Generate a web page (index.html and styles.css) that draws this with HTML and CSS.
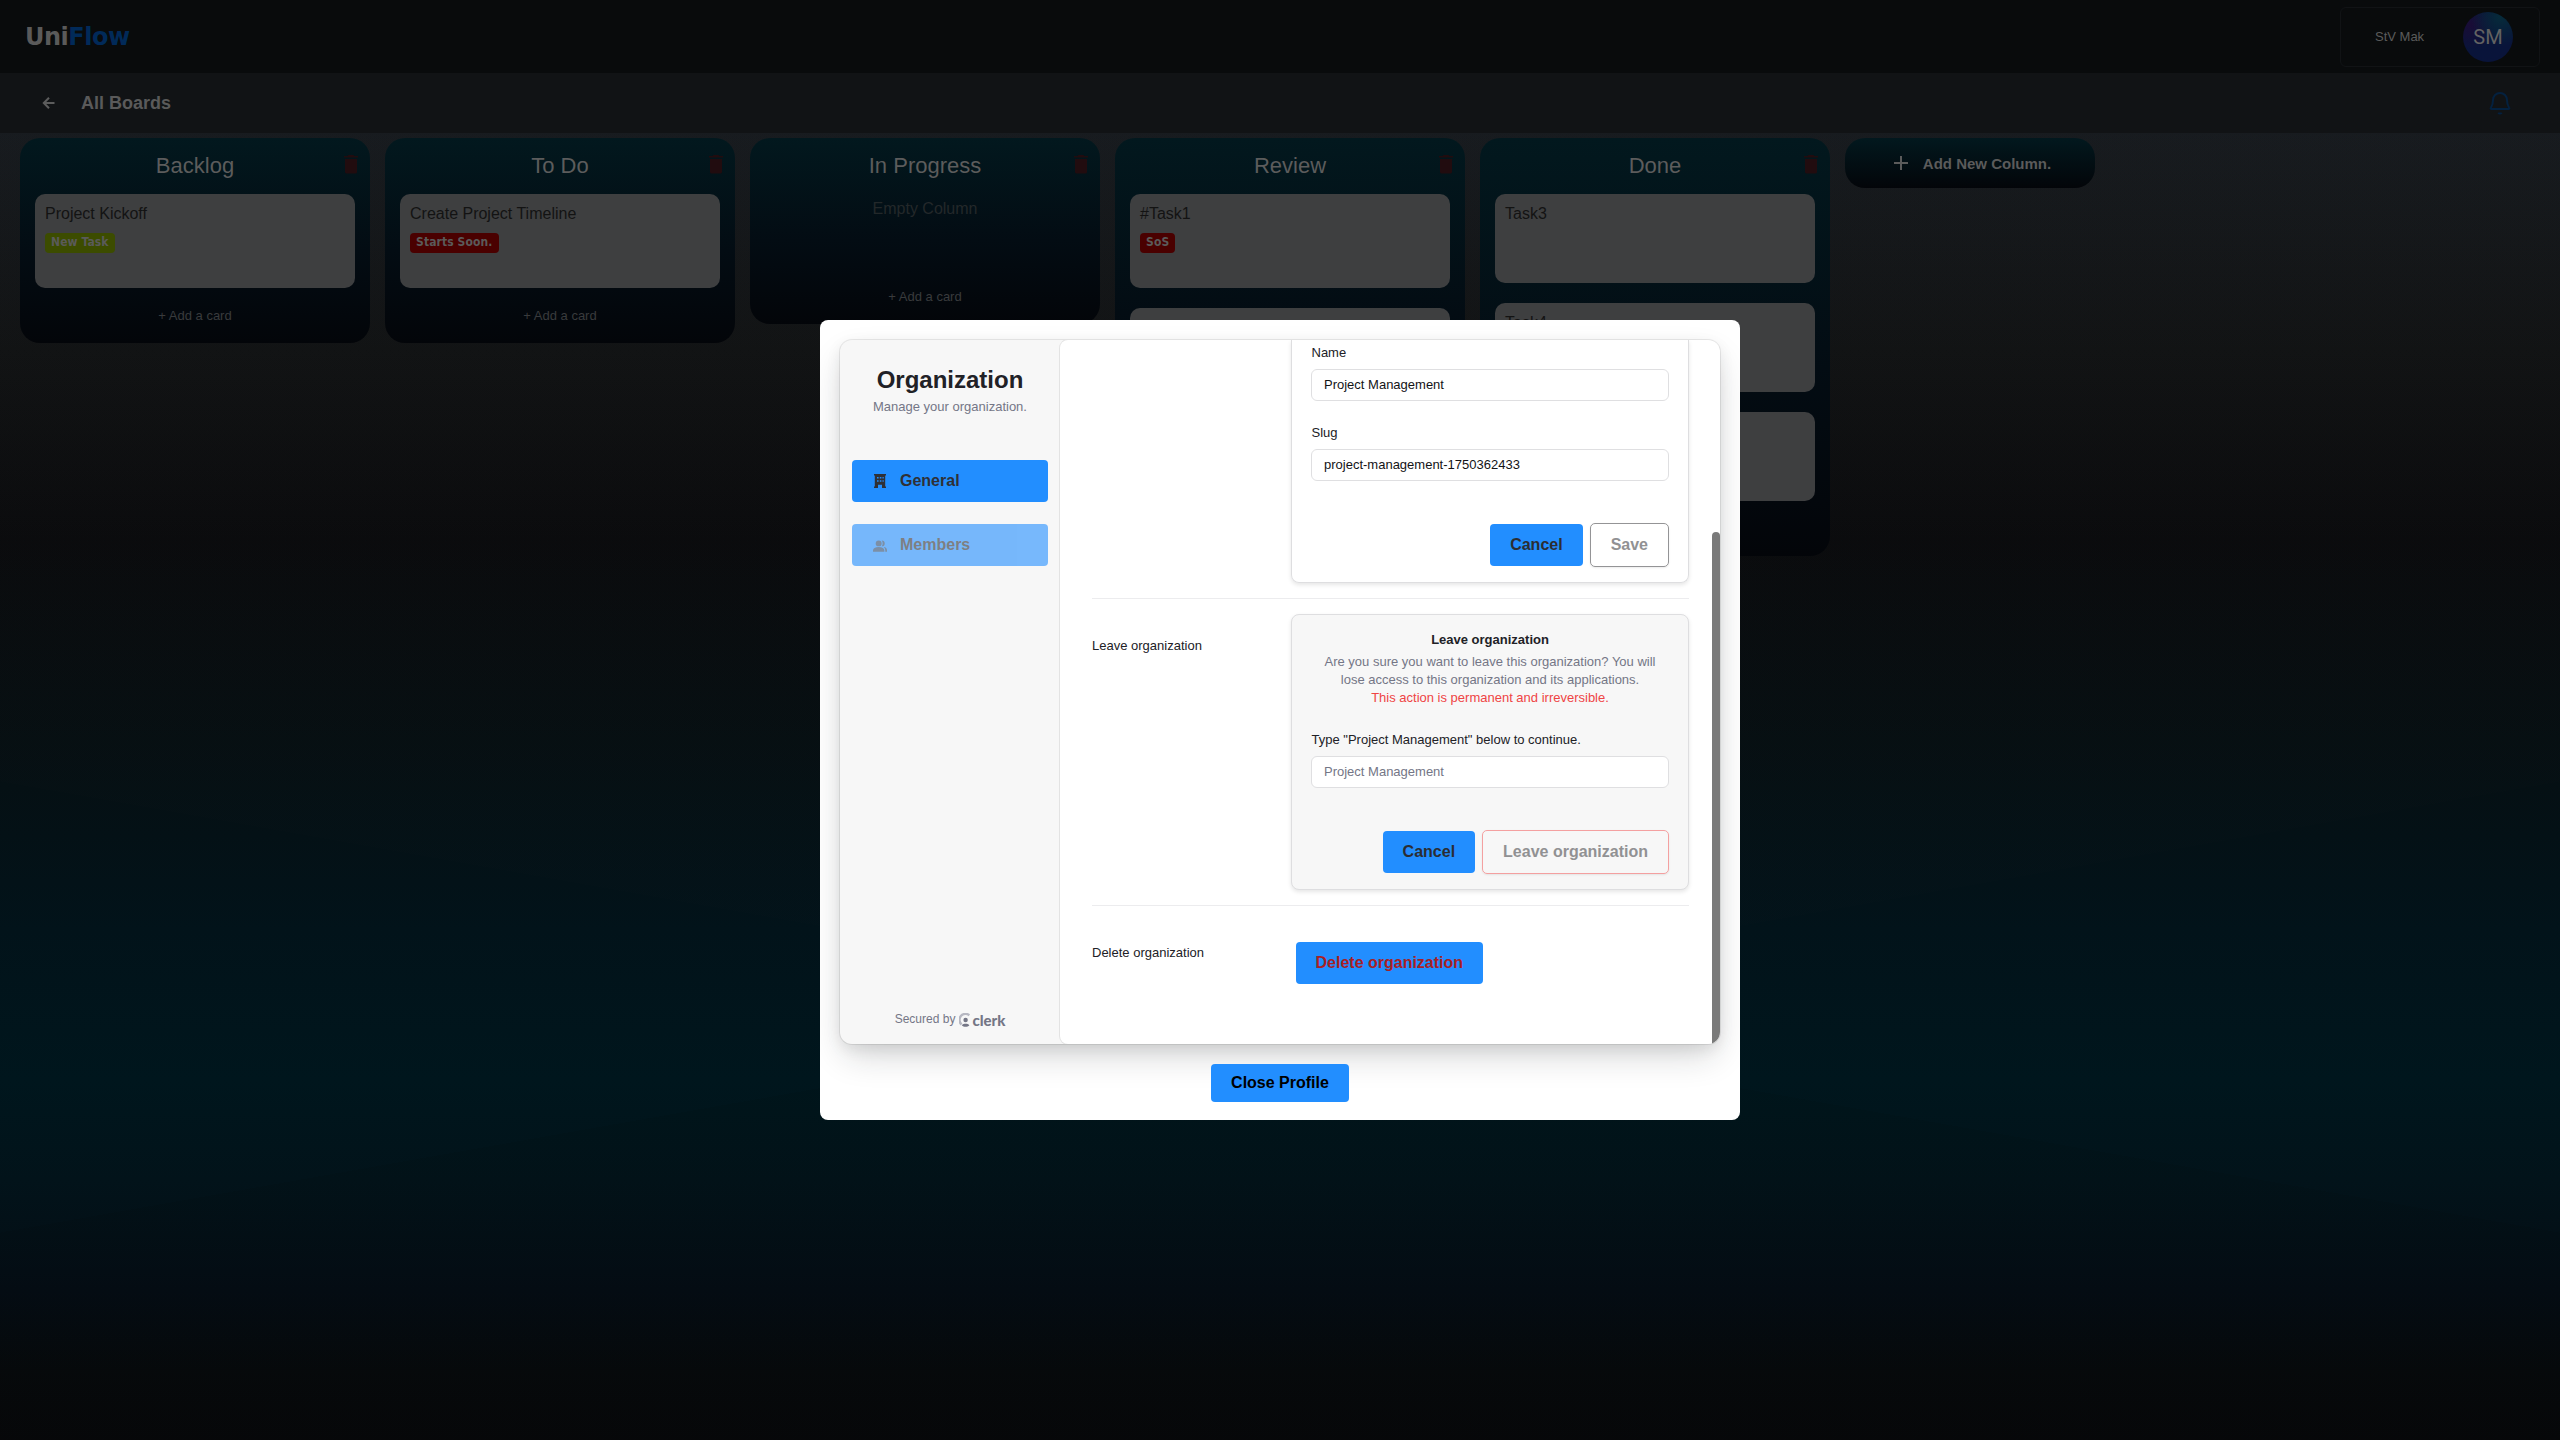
FILE: index.html
```
<!DOCTYPE html>
<html lang="en">
<head>
<meta charset="utf-8">
<title>UniFlow</title>
<link rel="stylesheet" href="styles.css">
</head>
<body>
<svg class="defs" aria-hidden="true">
  <symbol id="trash" viewBox="0 0 14 19"><path d="M4.4 0h5.2l.8 1H14v1.600H0V1h3.600zM1 4h12v13a1.600 1.600 0 0 1-1.600 1.500H2.600A1.600 1.600 0 0 1 1 17z"/></symbol>
</svg>
<header class="topbar">
  <div class="brand">Uni<span>Flow</span></div>
  <div class="account">
    <span class="account-name">StV Mak</span>
    <span class="avatar">SM</span>
  </div>
</header>
<nav class="subbar">
  <svg class="back" viewBox="0 0 16 16"><path d="M13.500 8H3M8 2.800 2.800 8 8 13.200"/></svg>
  <h1>All Boards</h1>
  <svg class="bell" viewBox="0 0 24 24"><path d="M12 2a7 7 0 0 0-7 7c0 4.500-1 6-2 7.500-.7 1-.5 1.500.3 1.500h17.400c.8 0 1-.5.3-1.500-1-1.500-2-3-2-7.500a7 7 0 0 0-7-7zM10.200 21.800c.9 1 2.700 1 3.600 0"/></svg>
</nav>
<main class="board">
  <section class="column">
    <div class="column-head"><h2>Backlog</h2><svg class="trash"><use href="#trash"/></svg></div>
    <article class="card"><p>Project Kickoff</p><span class="tag lime">New Task</span></article>
    <button class="add-card">+ Add a card</button>
  </section>
  <section class="column">
    <div class="column-head"><h2>To Do</h2><svg class="trash"><use href="#trash"/></svg></div>
    <article class="card"><p>Create Project Timeline</p><span class="tag red">Starts Soon.</span></article>
    <button class="add-card">+ Add a card</button>
  </section>
  <section class="column">
    <div class="column-head"><h2>In Progress</h2><svg class="trash"><use href="#trash"/></svg></div>
    <p class="empty">Empty Column</p>
    <button class="add-card">+ Add a card</button>
  </section>
  <section class="column">
    <div class="column-head"><h2>Review</h2><svg class="trash"><use href="#trash"/></svg></div>
    <article class="card"><p>#Task1</p><span class="tag red">SoS</span></article>
    <article class="card"></article>
    <button class="add-card"></button>
  </section>
  <section class="column">
    <div class="column-head"><h2>Done</h2><svg class="trash"><use href="#trash"/></svg></div>
    <article class="card short"><p>Task3</p></article>
    <article class="card short"><p>Task4</p></article>
    <article class="card short"></article>
    <button class="add-card"></button>
  </section>
  <button class="add-column"><svg viewBox="0 0 14 14"><path d="M7 0v14M0 7h14"/></svg>Add New Column.</button>
</main>

<div class="modal">
  <div class="profile">
    <aside class="side">
      <h2>Organization</h2>
      <p class="side-sub">Manage your organization.</p>
      <button class="nav-item"><svg viewBox="0 0 16 16"><path fill-rule="evenodd" d="M2 1h12v1.500h-.8v11H14V15h-4v-3.200H6V15H2v-1.500h.8v-11H2zM5 4v1.600h1.600V4zm2.800 0v1.600h1.600V4zm2.700 0v1.600h1.200V4zM5 7.200v1.600h1.600V7.200zm2.800 0v1.600h1.600V7.200zm2.700 0v1.600h1.200V7.200z"/></svg>General</button>
      <button class="nav-item dim"><svg viewBox="0 0 16 16"><circle cx="6.500" cy="5" r="3.400"/><path d="M0 14.500V13c0-2.600 2.500-4 6.500-4s6.500 1.400 6.500 4v1.500zM10 1.600a3.400 3.400 0 1 1 0 6.800c1.400-1.900 1.400-4.900 0-6.800zM14 14.500V13c0-1.500-.6-2.700-1.800-3.800 2.500.2 3.800 1.600 3.800 3.800v1.500z"/></svg>Members</button>
      <div class="secured">Secured by
        <svg class="clerk-mark" viewBox="0 0 12 14"><path class="arc" d="M10.300 2.300A5.600 5.600 0 0 0 2.600 11.500"/><circle cx="6.600" cy="7" r="2.200"/><path d="M2.800 12.200c2-1.900 5.600-1.900 7.600 0-2 2-5.600 2-7.600 0z"/></svg>
        <b>clerk</b>
      </div>
    </aside>
    <div class="content">
      <div class="row first">
        <div class="panel edit">
          <label>Name</label>
          <div class="field">Project Management</div>
          <label>Slug</label>
          <div class="field">project-management-1750362433</div>
          <div class="actions"><button class="btn">Cancel</button><button class="btn outline">Save</button></div>
        </div>
      </div>
      <div class="row leave">
        <div class="row-label">Leave organization</div>
        <div class="panel gray">
          <h3>Leave organization</h3>
          <p class="note">Are you sure you want to leave this organization? You will lose access to this organization and its applications.</p>
          <p class="warn">This action is permanent and irreversible.</p>
          <label>Type "Project Management" below to continue.</label>
          <div class="field placeholder">Project Management</div>
          <div class="actions"><button class="btn">Cancel</button><button class="btn outline danger">Leave organization</button></div>
        </div>
      </div>
      <div class="row delete">
        <div class="row-label">Delete organization</div>
        <button class="btn del">Delete organization</button>
      </div>
      <div class="thumb"></div>
    </div>
  </div>
  <button class="btn close">Close Profile</button>
</div>
</body>
</html>
```
FILE: styles.css
```
* { box-sizing: border-box; }
body {
  margin: 0; width: 2560px; height: 1440px; overflow: hidden; position: relative;
  font-family: "Liberation Sans", Arial, sans-serif; color: #5c5c5c;
  background:
    conic-gradient(from 280deg at 50% 1007px, rgba(90,60,60,.012) 0 160deg, transparent 160deg 180deg, rgba(0,0,0,.07) 180deg 340deg, transparent 340deg),
    linear-gradient(180deg, #171b1f 130px, #111314 350px, #0a0b0d 540px, #060f12 740px, #02131a 930px, #00161d 1080px, #02131a 1180px, #040d14 1290px, #060a0c 1370px, #06080a 1440px);
}
h1, h2, h3, p { margin: 0; font-weight: 400; }
button { font-family: inherit; border: 0; margin: 0; padding: 0; background: none; }
.defs { display: none; }

.topbar { height: 73px; background: #090b0c; display: flex; align-items: center; justify-content: space-between; padding: 0 20px 0 25px; }
.brand { font: 700 24px/32px "DejaVu Sans", sans-serif; letter-spacing: -.5px; color: #5a5a5a; }
.brand span { color: #012a59; }
.account { width: 200px; height: 60px; border: 1px solid #111315; border-radius: 6px; display: flex; align-items: center; padding-left: 34px; }
.account-name { width: 88px; font-size: 13px; font-weight: 500; color: #5b5b5b; }
.avatar { width: 50px; height: 50px; border-radius: 50%; display: flex; align-items: center; justify-content: center; font: 20px Roboto, sans-serif; color: #626262; background: radial-gradient(circle at 75% 10%, #062b3a 0, transparent 50%), radial-gradient(circle at 15% 25%, #190c36 0, transparent 45%), #09143a; }

.subbar { height: 60px; background: #111315; display: flex; align-items: center; padding: 0 48px 0 41px; }
.back { width: 16px; height: 16px; fill: none; stroke: #5c5c5c; stroke-width: 2; }
.subbar h1 { margin-left: 24px; font-size: 18px; font-weight: 700; flex: 1; color: #5a5a5a; }
.bell { width: 24px; height: 24px; fill: none; stroke: #04213f; stroke-width: 2; }

.board { display: flex; align-items: flex-start; gap: 15px; padding: 5px 20px; }
.column { width: 350px; flex: none; border-radius: 20px; padding: 0 15px; background: linear-gradient(180deg, #02181e, #030c13 55%, #030509); }
.column-head { height: 56px; display: flex; align-items: center; position: relative; }
.column-head h2 { flex: 1; text-align: center; font-size: 22px; line-height: 26px; }
.trash { position: absolute; right: -3px; top: 17px; width: 14px; height: 19px; fill: #210c0f; }
.card { height: 94px; border-radius: 10px; background: #3e3f40; padding: 10px; margin-bottom: 20px; display: flex; flex-direction: column; align-items: flex-start; }
.card.short { height: 89px; }
.card p { font-size: 16px; line-height: 19px; color: #131313; }
.tag { margin-top: 10px; height: 20px; border-radius: 4px; padding: 0 6px; font: 700 12px/19px "DejaVu Sans Condensed", "DejaVu Sans", sans-serif; font-stretch: condensed; letter-spacing: .1px; color: #5a5a5a; }
.lime { background: #3c4c00; }
.red { background: #4a0000; }
.add-card { display: block; width: 100%; height: 35px; font-size: 13px; color: #393b3d; line-height: 15px; padding-bottom: 20px; }
.empty { height: 95px; padding-top: 5px; text-align: center; font-size: 16px; line-height: 19px; color: #23282a; }
.add-column { width: 250px; height: 50px; border-radius: 20px; background: linear-gradient(180deg, #02181e, #030509); display: flex; align-items: center; justify-content: center; gap: 15px; padding-left: 5px; font-size: 15px; font-weight: 700; color: #5b5b5b; }
.add-column svg { width: 14px; height: 14px; stroke: #5b5b5b; stroke-width: 2; }

.modal { position: absolute; left: 820px; top: 320px; width: 920px; height: 800px; background: #fff; border-radius: 8px; padding: 20px; overflow: hidden; display: flex; flex-direction: column; align-items: center; color: #212126; }
.profile { width: 880px; height: 704px; flex: none; border-radius: 12px; display: flex; background: #f7f7f7; overflow: hidden; box-shadow: 0 0 0 1px rgba(0,0,0,.08), 0 15px 35px -5px rgba(25,28,33,.2), 0 5px 15px rgba(0,0,0,.08); }
.side { width: 220px; display: flex; flex-direction: column; align-items: center; padding: 26px 12px 0; }
.side h2 { font-size: 24px; line-height: 28px; font-weight: 700; }
.side-sub { font-size: 13px; line-height: 18px; margin-top: 4px; color: #747686; }
.nav-item { width: 196px; height: 42px; border-radius: 4px; background: #228eff; display: flex; align-items: center; padding-left: 20px; font-size: 16px; font-weight: 700; color: #2f3036; }
.nav-item svg { width: 16px; height: 16px; margin-right: 12px; fill: currentColor; }
.side-sub + .nav-item { margin-top: 44px; }
.dim { margin-top: 22px; opacity: .6; }
.dim svg { width: 14px; height: 14px; margin: 1px 13px 0 1px; opacity: .7; }
.secured { margin-top: auto; height: 34px; display: flex; font-size: 12px; line-height: 18px; color: #747686; }
.clerk-mark { width: 12px; height: 14px; margin: 3px 1px 0 4px; fill: #747686; }
.clerk-mark .arc { fill: none; stroke: #b7b8c2; stroke-width: 2.400; }
.secured b { font: 900 15px/20px Lato, sans-serif; }
.content { width: 660px; position: relative; background: #fff; border-radius: 8px; box-shadow: 0 0 0 1px rgba(0,0,0,.08); padding: 0 31px 0 32px; font-size: 13px; }
.row { display: flex; justify-content: space-between; width: 597px; }
.first { justify-content: flex-end; height: 259px; border-bottom: 1px solid #ececee; }
.panel { width: 398px; padding: 0 19px; border: 1px solid #dedee0; border-radius: 8px; box-shadow: 0 2px 4px rgba(0,0,0,.1); }
.edit { height: 243px; border-top: 0; border-radius: 0 0 8px 8px; padding-top: 4px; }
.panel label { display: block; line-height: 18px; padding-left: .500px; }
.field { height: 32px; margin: 7px 0 23px; border: 1px solid #dfdfe1; border-radius: 6px; background: #fff; padding: 0 12px; line-height: 29px; color: #131316; }
.field.placeholder { color: #747686; }
.actions { display: flex; justify-content: flex-end; align-items: center; gap: 7px; margin-top: 42px; }
.btn { height: 42px; flex: none; border-radius: 4px; padding: 0 20px; background: #228eff; color: #2b2d33; font-size: 16px; font-weight: 700; }
.btn.outline { height: 44px; background: transparent; color: #919193; border: 1px solid #949496; border-radius: 5px; box-shadow: 0 1px 2px rgba(0,0,0,.08); }
.btn.danger { border-color: #f4a0a0; }
.leave { height: 307px; border-bottom: 1px solid #ececee; }
.row-label { line-height: 18px; }
.leave .row-label { margin-top: 38px; }
.gray { margin-top: 15px; height: 276px; background: #f7f7f7; padding-top: 16px; }
.gray h3 { text-align: center; font-size: 13px; line-height: 18px; font-weight: 700; }
.note, .warn { text-align: center; line-height: 18px; color: #747686; padding: 0 10px; }
.note { margin-top: 4px; }
.warn { color: #ef4444; margin-bottom: 24px; }
.delete .row-label { margin-top: 38px; width: 204px; }
.delete { justify-content: flex-start; }
.btn.del { margin-top: 36px; padding: 0 19.500px; color: #a81e24; }
.thumb { position: absolute; right: 0; bottom: 0; width: 8px; height: 512px; background: #7a7a7a; border-radius: 4px 4px 0 0; }
.btn.close { height: 38px; color: #000; margin-top: 20px; }
```
